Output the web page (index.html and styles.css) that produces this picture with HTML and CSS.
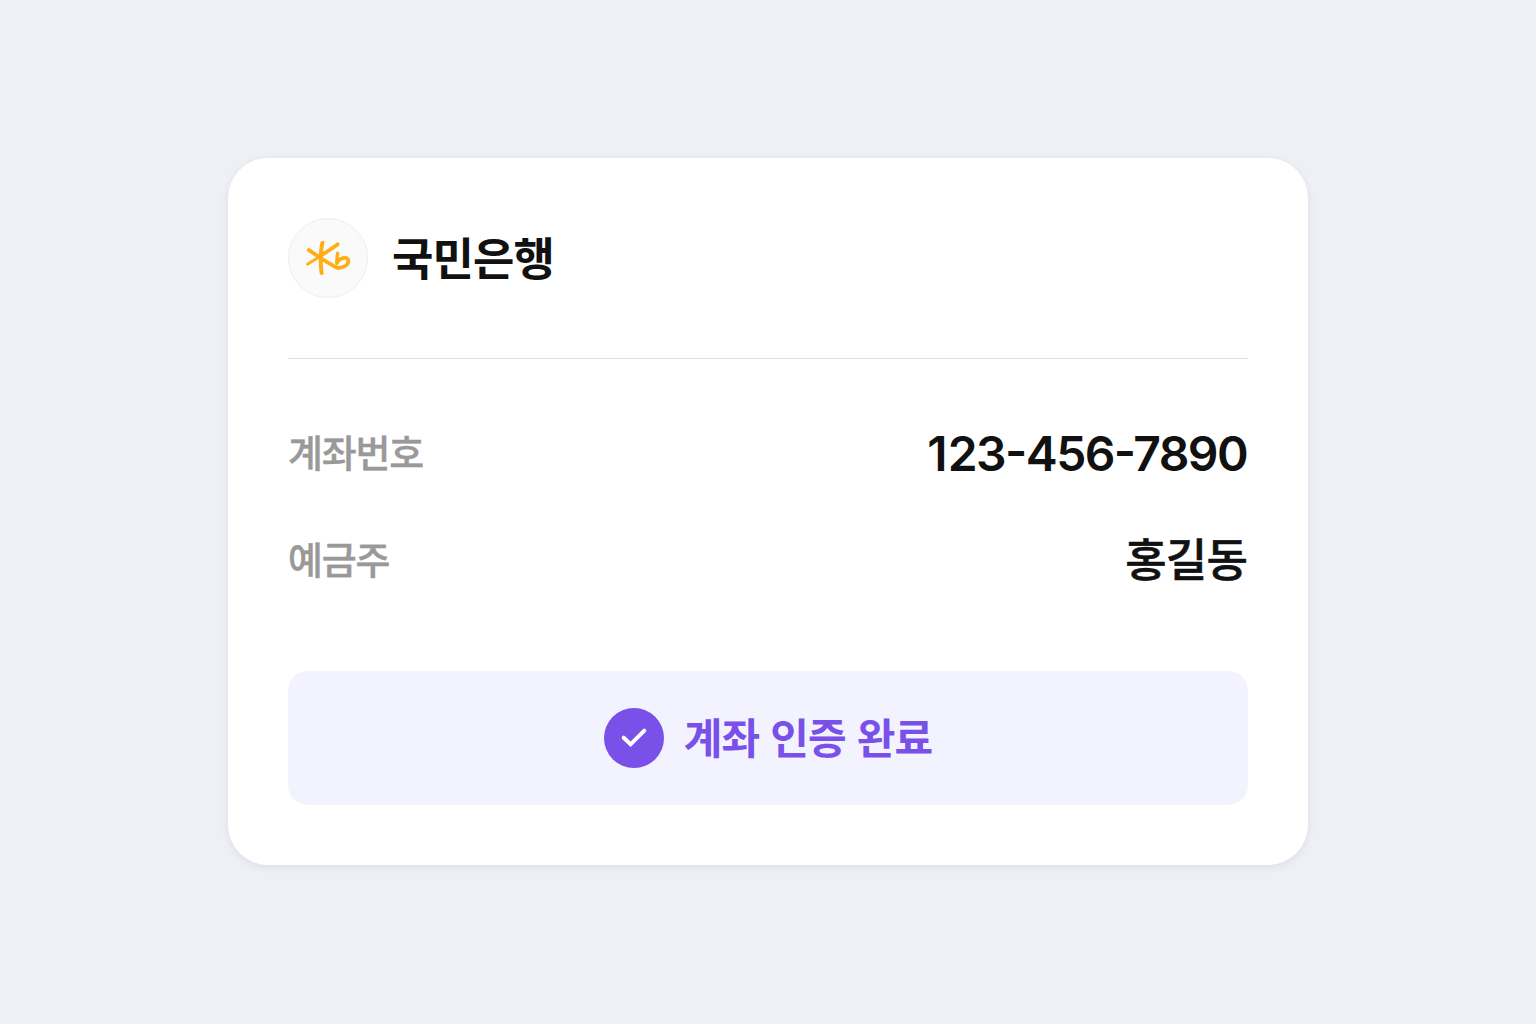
FILE: index.html
```html
<!DOCTYPE html>
<html lang="ko">
<head>
    <meta charset="UTF-8">
    <meta name="viewport" content="width=device-width, initial-scale=1.0">
    <title>계좌 인증</title>
    <link rel="stylesheet" href="styles.css">
</head>
<body>
    <div class="card">
        <div class="bank">
            <div class="bank-logo">
                <svg width="78" height="78" viewBox="289 219 78 78" fill="none" stroke="#ffae17" stroke-linecap="round" stroke-linejoin="round">
                    <path stroke-width="4" d="M322.4 242.8C320.4 252 320.4 264 321.6 273"/>
                    <path stroke-width="3.8" d="M308.9 250.1C314 253.5 329 264.3 338 268C343 267.5 348.4 265.3 348.4 261C348.4 256.6 341 256.5 337 262.3"/>
                    <path stroke-width="3.7" d="M337.7 244.3C332 249 327 251.5 322 255"/>
                    <path stroke-width="2.8" d="M322 255L307.5 264.3"/>
                    <path stroke-width="3.4" d="M337.7 253.3C337 257 336.7 260 337 263.3"/>
                </svg>
            </div>
            <h1 class="bank-name">국민은행</h1>
        </div>
        <dl class="info">
            <div class="info-row">
                <dt class="label">계좌번호</dt>
                <dd class="value number">123-456-7890</dd>
            </div>
            <div class="info-row">
                <dt class="label">예금주</dt>
                <dd class="value">홍길동</dd>
            </div>
        </dl>
        <div class="result">
            <svg class="check" width="60" height="60" viewBox="0 0 60 60">
                <circle cx="30" cy="30" r="30" fill="#7950e8"/>
                <path d="M19.7 29.7L26.6 36.3L40.3 22.6" fill="none" stroke="#fff" stroke-width="4" stroke-linecap="round"/>
            </svg>
            <span class="result-text">계좌 인증 완료</span>
        </div>
    </div>
</body>
</html>
```
FILE: styles.css
```css
* {
    box-sizing: border-box;
    margin: 0;
    padding: 0;
}
body {
    display: flex;
    justify-content: center;
    padding-top: 158px;
    min-height: 100vh;
    background-color: #eff0f5;
    color: #111;
    font-family: Inter, "Noto Sans CJK KR", sans-serif;
}
.card {
    width: 1080px;
    height: 707px;
    padding: 60px;
    background-color: #fff;
    border-radius: 40px;
    box-shadow: 0 2px 8px rgba(0,0,0,0.08);
}
.bank {
    display: flex;
    align-items: center;
    gap: 24px;
    height: 141px;
    padding-bottom: 60px;
    border-bottom: 1px solid #ddd;
}
.bank-logo {
    width: 80px;
    height: 80px;
    background-color: #fafafa;
    border: 1px solid #eee;
    border-radius: 50%;
}
.bank-logo svg {
    display: block;
}
.bank-name {
    padding-top: 2px;
    font-size: 45px;
    font-weight: 700;
    line-height: 67px;
    letter-spacing: -0.9px;
}
.info {
    display: flex;
    flex-direction: column;
    gap: 40px;
    padding: 60px 0;
}
.info-row {
    display: flex;
    justify-content: space-between;
    align-items: center;
    height: 67px;
}
.label {
    color: #999;
    font-size: 38px;
    font-weight: 500;
    line-height: 54px;
    letter-spacing: -1.2px;
    -webkit-text-stroke: 0.4px #999;
}
.value {
    padding: 2px 1px 0 0;
    font-size: 45px;
    font-weight: 500;
    line-height: 67px;
    letter-spacing: -0.8px;
    -webkit-text-stroke: 0.6px #111;
}
.value.number {
    font-size: 48px;
    font-weight: 600;
    letter-spacing: -1.6px;
    font-feature-settings: "case";
    -webkit-text-stroke: 0;
}
.value.number::first-letter {
    letter-spacing: 0.2px;
}
.result {
    display: flex;
    justify-content: center;
    align-items: center;
    gap: 20px;
    height: 134px;
    margin-top: 18px;
    background-color: #f3f2ff;
    border-radius: 20px;
}
.result-text {
    padding-top: 1px;
    color: #7950e8;
    font-size: 42px;
    font-weight: 700;
    line-height: 62px;
    letter-spacing: -0.9px;
    word-spacing: 2px;
}
```
